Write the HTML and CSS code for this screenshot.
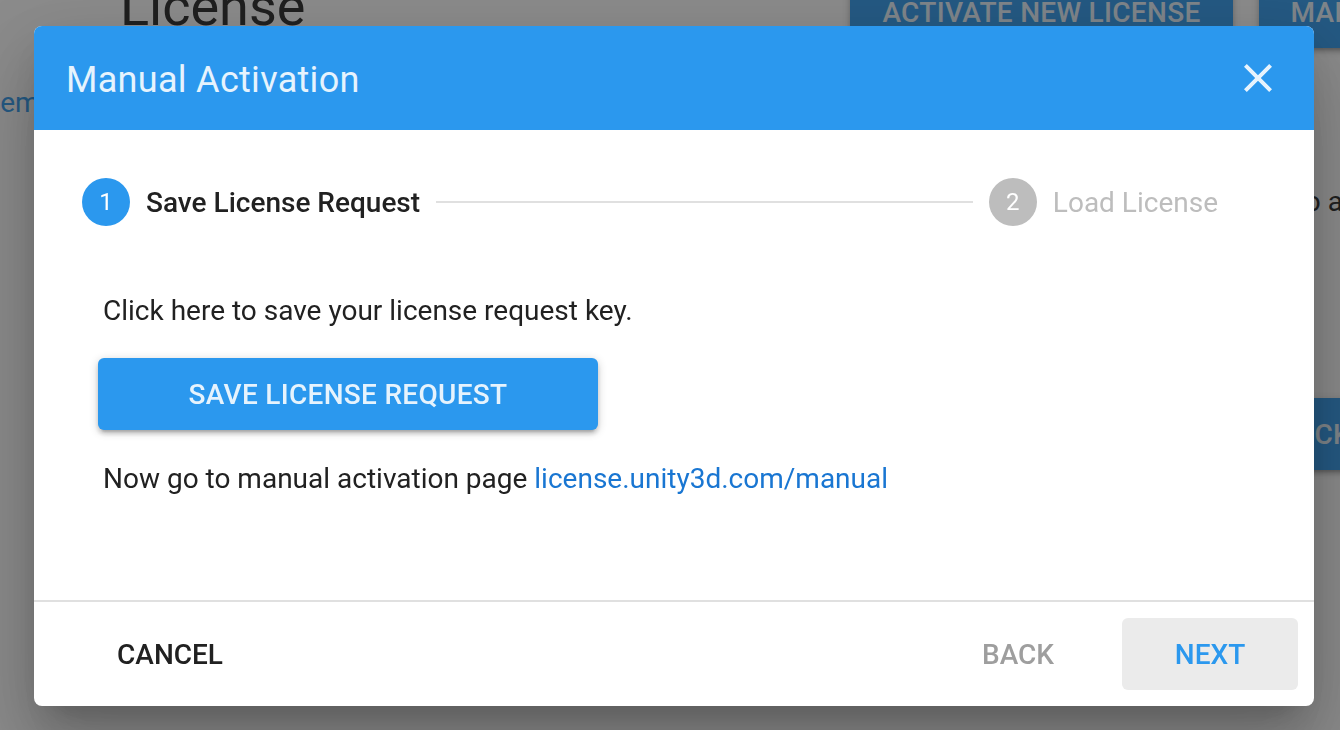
FILE: index.html
```html
<!DOCTYPE html>
<html lang="en">
<head>
  <meta charset="UTF-8" />
  <meta name="viewport" content="width=device-width, initial-scale=1.0" />
  <title>License - Manual Activation</title>
  <link rel="stylesheet" href="styles.css">
</head>
<body>
  <!-- Page behind the dialog -->
  <div class="page">
    <header class="page-head">
      <h1>License</h1>
      <div class="head-actions">
        <button class="raised-button">ACTIVATE NEW LICENSE</button>
        <button class="raised-button">MANUAL ACTIVATION</button>
      </div>
    </header>
    <div class="page-body">
      <a class="page-link" href="#">Remove license</a>
      <div class="page-side">
        <p>Go to account</p>
        <button class="raised-button">PICK LICENSE FILE</button>
      </div>
    </div>
  </div>

  <!-- Manual activation dialog -->
  <div class="backdrop">
    <div class="dialog">
      <div class="dialog-title">
        <h2>Manual Activation</h2>
        <button class="close-button" aria-label="Close">
          <svg viewBox="0 0 24 24" width="48" height="48">
            <path d="M19 6.41L17.59 5 12 10.59 6.41 5 5 6.41 10.59 12 5 17.59 6.41 19 12 13.41 17.59 19 19 17.59 13.41 12z" fill="currentColor"/>
          </svg>
        </button>
      </div>

      <div class="dialog-body">
        <div class="stepper">
          <div class="step active">
            <span class="step-icon">1</span>
            <span class="step-label">Save License Request</span>
          </div>
          <div class="step-connector"></div>
          <div class="step">
            <span class="step-icon">2</span>
            <span class="step-label">Load License</span>
          </div>
        </div>

        <div class="step-content">
          <p>Click here to save your license request key.</p>
          <button class="raised-button save-button">SAVE LICENSE REQUEST</button>
          <p>Now go to manual activation page <a href="#">license.unity3d.com/manual</a></p>
        </div>
      </div>

      <div class="dialog-actions">
        <button class="text-button cancel-button">CANCEL</button>
        <button class="text-button" disabled>BACK</button>
        <button class="text-button next-button">NEXT</button>
      </div>
    </div>
  </div>
</body>
</html>
```
FILE: styles.css
```css
*, *::before, *::after {
  box-sizing: border-box;
}

html, body {
  margin: 0;
  padding: 0;
  height: 100vh;
  overflow: hidden;
}

body {
  background: #ffffff;
  color: #212121;
  font-family: Roboto, "Liberation Sans", sans-serif;
  font-size: 28px;
}

button {
  font-family: inherit;
  font-size: 28px;
  font-weight: 500;
  border: none;
  cursor: pointer;
}

p {
  margin: 0;
  line-height: 42px;
}

/* Underlying page */
.page {
  width: 1700px;
}

.page-head {
  display: flex;
  align-items: flex-start;
  margin-top: -27px;
  padding-left: 120px;
}

.page-head h1 {
  margin: 0;
  font-size: 54px;
  font-weight: 400;
  line-height: 67px;
}

.head-actions {
  display: flex;
  gap: 26px;
  margin-top: 3px;
  margin-left: 545px;
}

.raised-button {
  height: 72px;
  padding: 0 32px;
  background: #2b98ee;
  color: #e6f3fd;
  border-radius: 6px;
  white-space: nowrap;
  letter-spacing: 0.3px;
  box-shadow: 0 2px 10px rgba(0, 0, 0, 0.2), 0 4px 4px rgba(0, 0, 0, 0.14), 0 6px 2px -4px rgba(0, 0, 0, 0.12);
}

.page-body {
  display: grid;
  grid-template-columns: 1254px 400px;
  align-items: start;
}

.page-link {
  margin-top: 34px;
  margin-left: -17px;
  color: #2b98ee;
  text-decoration: none;
  line-height: 42px;
}

.page-side p {
  margin-top: 133px;
}

.page-side .raised-button {
  margin: 175px 0 0 2px;
}

/* Dark backdrop and dialog */
.backdrop {
  position: fixed;
  top: 0;
  left: 0;
  width: 100%;
  height: 100%;
  background: rgba(32, 32, 32, 0.52);
  padding: 26px 0 0 34px;
}

.dialog {
  width: 1280px;
  height: 680px;
  display: flex;
  flex-direction: column;
  background: #ffffff;
  border-radius: 8px;
  overflow: hidden;
  box-shadow: 0 22px 70px 8px rgba(0, 0, 0, 0.12), 0 48px 76px 6px rgba(0, 0, 0, 0.14), 0 18px 30px -14px rgba(0, 0, 0, 0.2);
}

.dialog-title {
  height: 104px;
  display: flex;
  align-items: center;
  justify-content: space-between;
  padding: 3px 32px 0 32px;
  background: #2b98ee;
  color: #e6f3fd;
}

.dialog-title h2 {
  margin: 0;
  font-size: 36px;
  font-weight: 400;
  letter-spacing: 0.3px;
}

.close-button {
  display: flex;
  margin-top: -3px;
  padding: 0;
  background: none;
  color: #e6f3fd;
}

.dialog-body {
  flex: 1;
  padding: 48px 96px 0 48px;
}

/* Stepper */
.stepper {
  display: flex;
  align-items: center;
  height: 48px;
}

.step {
  display: flex;
  align-items: center;
  gap: 16px;
}

.step-icon {
  width: 48px;
  height: 48px;
  border-radius: 50%;
  background: #bdbdbd;
  color: #ffffff;
  font-size: 24px;
  display: flex;
  align-items: center;
  justify-content: center;
}

.step-label {
  color: #bdbdbd;
}

.step.active .step-icon {
  background: #2b98ee;
}

.step.active .step-label {
  color: #212121;
  font-weight: 500;
}

.step-connector {
  flex: 1;
  margin: 0 16px;
  border-top: 2px solid #e0e0e0;
}

/* Step content */
.step-content {
  padding: 64px 0 0 16px;
}

.step-content p {
  padding-left: 5px;
}

.save-button {
  width: 500px;
  margin: 26px 0 28px;
  display: block;
}

.step-content a {
  color: #1976d2;
  text-decoration: none;
}

/* Footer actions */
.dialog-actions {
  display: flex;
  gap: 16px;
  padding: 16px 16px 16px 48px;
  border-top: 2px solid #e0e0e0;
}

.text-button {
  min-width: 176px;
  height: 72px;
  padding: 0 32px;
  background: none;
  color: #212121;
  border-radius: 6px;
}

.cancel-button {
  margin-right: auto;
}

.text-button:disabled {
  color: #9e9e9e;
  cursor: default;
}

.next-button {
  background: #ebebeb;
  color: #2b98ee;
}
```
